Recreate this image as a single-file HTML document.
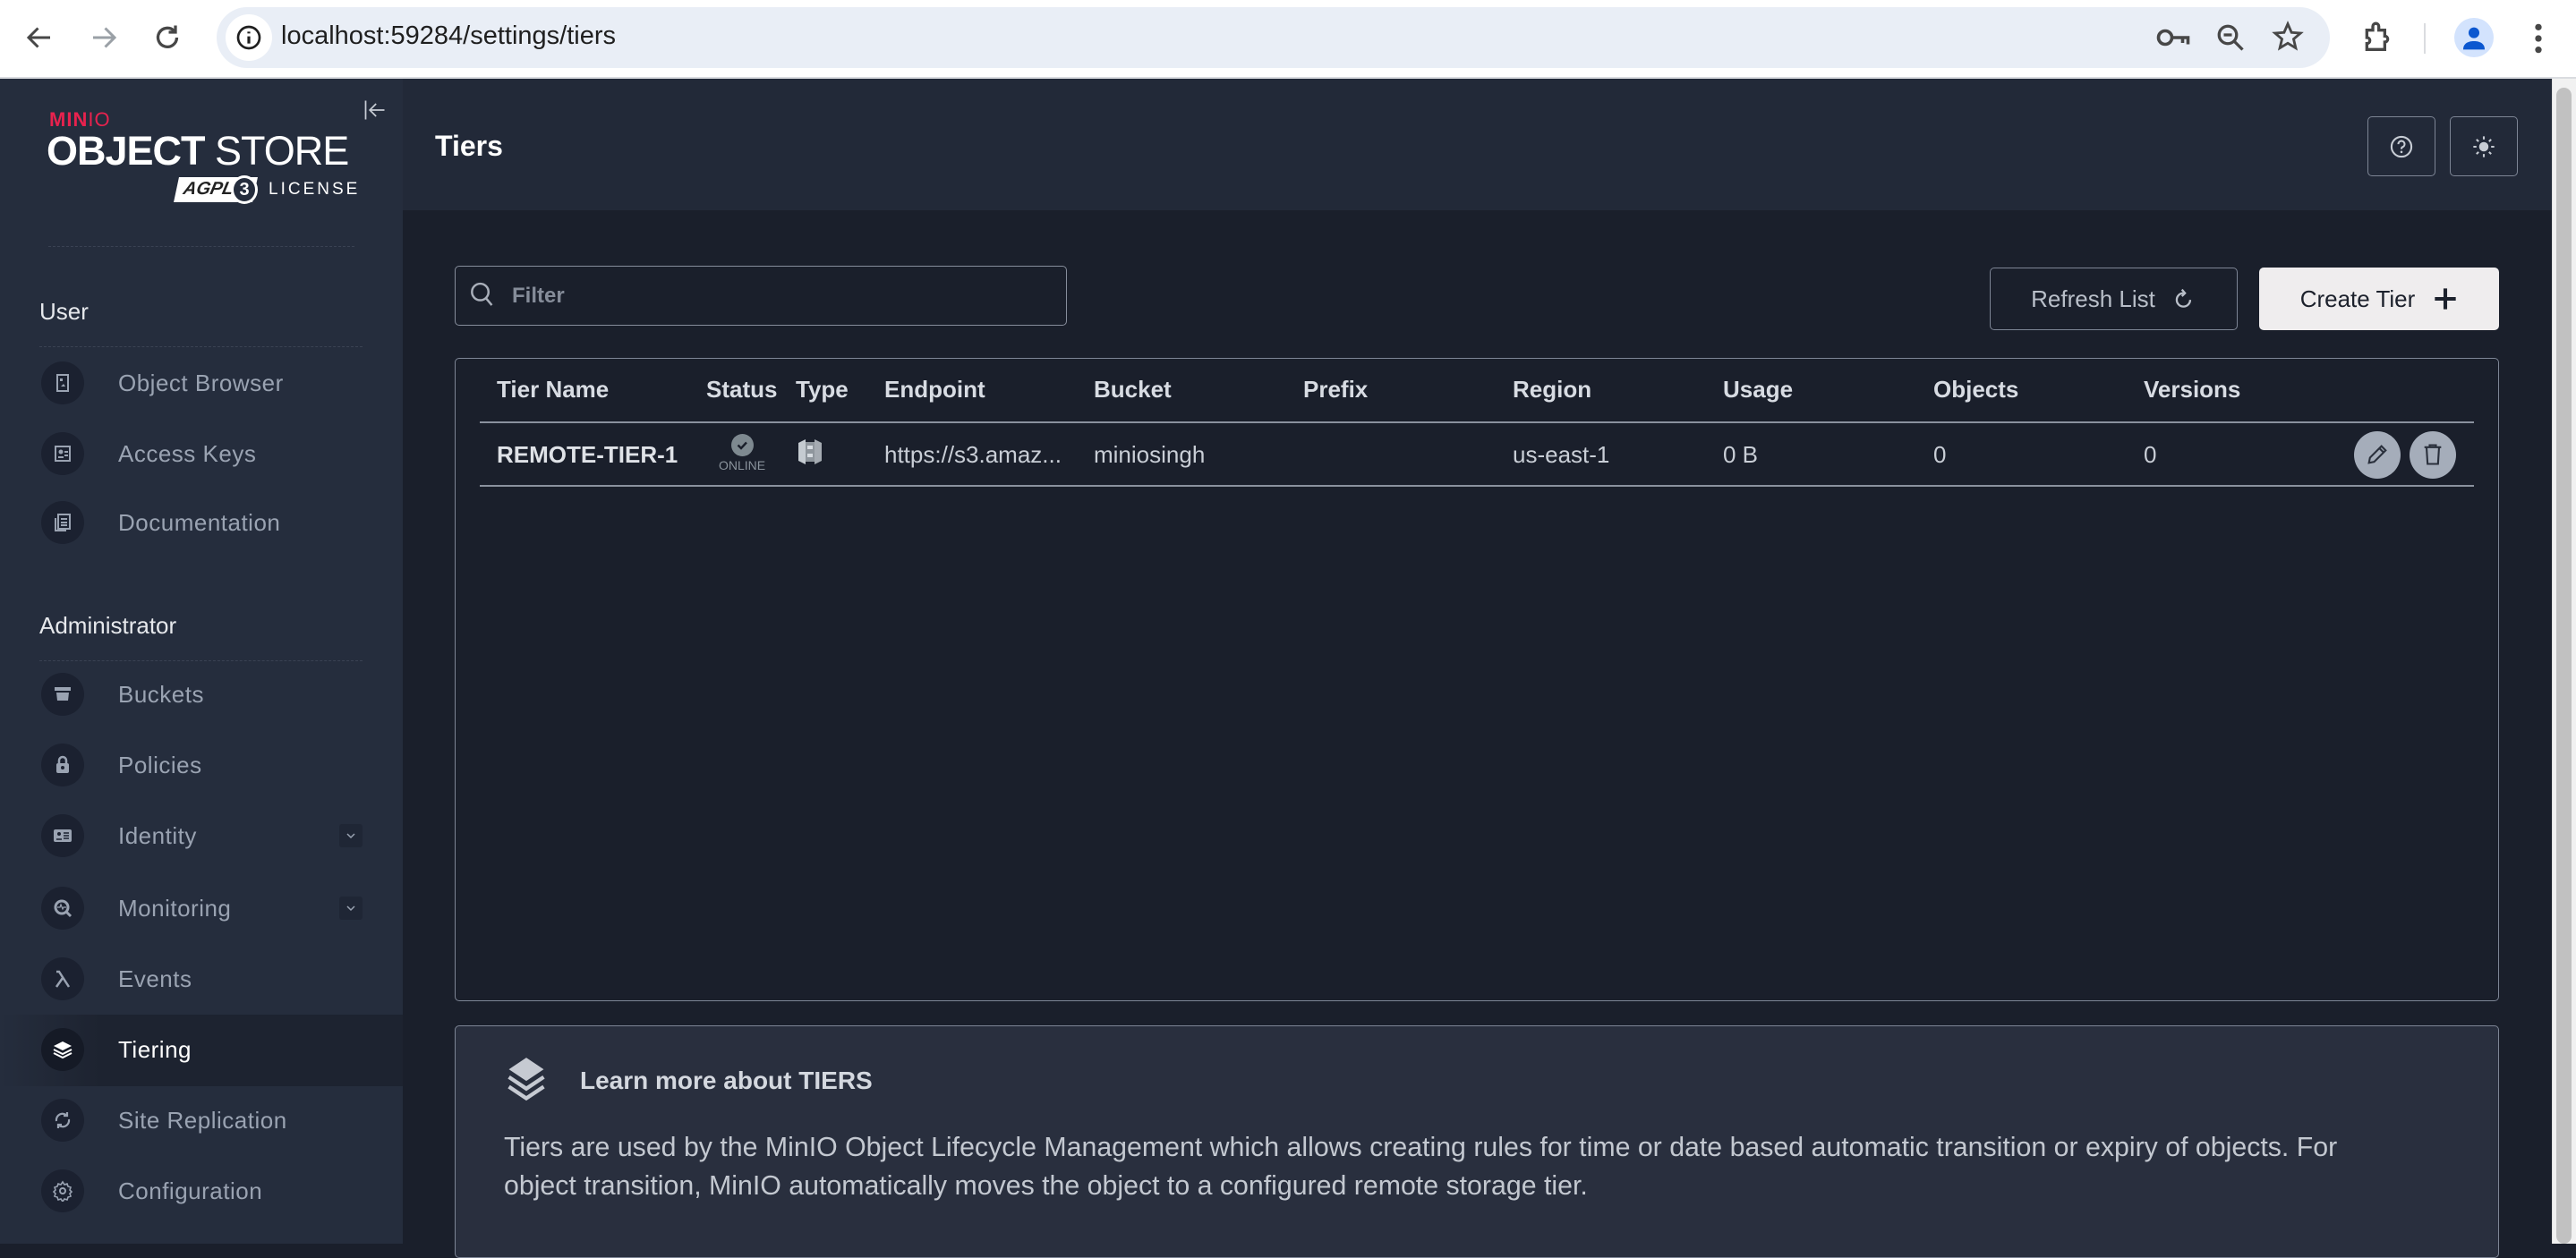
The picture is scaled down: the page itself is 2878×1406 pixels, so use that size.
<!DOCTYPE html>
<html><head><meta charset="utf-8"><style>
*{box-sizing:border-box;margin:0;padding:0}
body{width:2878px;height:1390px;overflow:hidden;font-family:"Liberation Sans",sans-serif;background:#1a1f2b;position:relative}
.abs{position:absolute}
#chrome{left:0;top:0;width:2878px;height:88px;background:#fff;border-bottom:2px solid #dadce0}
#pill{left:242px;top:8px;width:2361px;height:68px;border-radius:34px;background:#e9eef6}
#url{left:314px;top:22px;font-size:29px;color:#1f1f1f}
#side{left:0;top:88px;width:450px;height:1302px;background:#252d3d}
#hdr{left:450px;top:88px;width:2401px;height:147px;background:#222938}
#scroll{left:2851px;top:88px;width:27px;height:1302px;background:#f1f1f1;border-left:1px solid #e0e0e0}
#thumb{left:2856px;top:98px;width:17px;height:1292px;border-radius:9px;background:#c1c1c1}
.sec{left:44px;font-size:26px;color:#e6e8ec}
.sep{left:44px;width:361px;height:0;border-top:1px dashed #3a4253}
.item{left:44px;width:406px;height:60px}
.item .ic{position:absolute;left:2px;top:6px;width:48px;height:48px;border-radius:50%;background:#1b2130}
.item .ic svg{position:absolute;left:12px;top:12px}
.item .tx{position:absolute;left:88px;top:15px;font-size:26px;color:#9aa3b2;letter-spacing:0.5px}
.chev{position:absolute;left:335px;top:17px;width:26px;height:26px;background:#1f2635;border-radius:3px}
.btn{border-radius:5px;font-size:26px;display:flex;align-items:center;justify-content:center}
.hcell{position:absolute;top:420px;font-size:26px;font-weight:bold;color:#d8dce3}
.rcell{position:absolute;top:493px;font-size:26px;color:#c9ced6}
</style></head><body>
<div id="chrome" class="abs"></div>
<svg class="abs" style="left:26px;top:24px" width="36" height="36" viewBox="0 0 24 24"><path d="M20 12H5M11 5l-7 7 7 7" stroke="#474747" stroke-width="2" fill="none"/></svg>
<svg class="abs" style="left:98px;top:24px" width="36" height="36" viewBox="0 0 24 24"><path d="M4 12h15M13 5l7 7-7 7" stroke="#9aa0a6" stroke-width="2" fill="none"/></svg>
<svg class="abs" style="left:169px;top:24px" width="36" height="36" viewBox="0 0 24 24"><path d="M19 12a7 7 0 1 1-2-5" stroke="#474747" stroke-width="2.2" fill="none"/><path d="M18 3v5h-5" stroke="#474747" stroke-width="2.2" fill="none"/></svg>
<div id="pill" class="abs"></div>
<div class="abs" style="left:252px;top:16px;width:52px;height:52px;border-radius:50%;background:#fff"></div>
<svg class="abs" style="left:262px;top:26px" width="32" height="32" viewBox="0 0 24 24"><circle cx="12" cy="12" r="9" stroke="#1f1f1f" stroke-width="2" fill="none"/><path d="M12 11v6M12 7v1.5" stroke="#1f1f1f" stroke-width="2.4"/></svg>
<div id="url" class="abs" style="top:24px">localhost:59284/settings/tiers</div>
<svg class="abs" style="left:2408px;top:24px" width="40" height="36" viewBox="0 0 26 24"><circle cx="7" cy="12" r="5" stroke="#474747" stroke-width="2.4" fill="none"/><path d="M12 12h12v5M20 12v4" stroke="#474747" stroke-width="2.4" fill="none"/></svg>
<svg class="abs" style="left:2474px;top:24px" width="36" height="36" viewBox="0 0 24 24"><circle cx="10" cy="10" r="6.5" stroke="#474747" stroke-width="2.2" fill="none"/><path d="M15 15l6 6M7 10h6" stroke="#474747" stroke-width="2.2"/></svg>
<svg class="abs" style="left:2537px;top:22px" width="38" height="38" viewBox="0 0 24 24"><path d="M12 3l2.6 6 6.4.5-4.9 4.2 1.5 6.3L12 16.6 6.4 20l1.5-6.3L3 9.5l6.4-.5z" stroke="#474747" stroke-width="1.8" fill="none"/></svg>
<svg class="abs" style="left:2636px;top:22px" width="40" height="40" viewBox="0 0 24 24"><path d="M5 7h4V4.5a2 2 0 0 1 4 0V7h4v4a2 2 0 0 1 0 4v5H5v-4a2 2 0 0 0 0-4z" stroke="#474747" stroke-width="2" fill="none"/></svg>
<div class="abs" style="left:2708px;top:26px;width:2px;height:34px;background:#dadce0"></div>
<div class="abs" style="left:2742px;top:20px;width:44px;height:44px;border-radius:50%;background:#d3e3fd"></div>
<svg class="abs" style="left:2748px;top:26px" width="32" height="32" viewBox="0 0 24 24"><circle cx="12" cy="8" r="4.5" fill="#0b57d0"/><path d="M3 22c0-5 4-7 9-7s9 2 9 7z" fill="#0b57d0"/></svg>
<svg class="abs" style="left:2826px;top:24px" width="20" height="38" viewBox="0 0 10 24"><circle cx="5" cy="4" r="2.3" fill="#474747"/><circle cx="5" cy="12" r="2.3" fill="#474747"/><circle cx="5" cy="20" r="2.3" fill="#474747"/></svg>

<div id="side" class="abs"></div>
<div class="abs" style="left:55px;top:121px;font-size:22px;font-weight:bold;color:#e8224e;letter-spacing:1px">MIN<span style="font-weight:normal">IO</span></div>
<div class="abs" style="left:52px;top:143px;font-size:45px;color:#fff;letter-spacing:-1px;white-space:nowrap"><b>OBJECT</b> STORE</div>
<div class="abs" style="left:197px;top:198px;width:88px;height:28px;background:#fff;transform:skewX(-12deg);color:#222;font-size:20px;font-style:italic;font-weight:bold;line-height:26px;padding-left:8px">AGPL</div>
<div class="abs" style="left:258px;top:196px;width:30px;height:32px;border-radius:50%;background:#252d3d;border:3px solid #fff;color:#fff;font-size:20px;font-weight:bold;text-align:center;line-height:26px">3</div>
<div class="abs" style="left:300px;top:201px;font-size:19px;color:#fff;letter-spacing:3px">LICENSE</div>
<svg class="abs" style="left:405px;top:110px" width="28" height="26" viewBox="0 0 24 22"><path d="M3 2v18M21 11H8M13 5l-6 6 6 6" stroke="#c7ccd4" stroke-width="1.5" fill="none"/></svg>
<div class="sep abs" style="top:275px;left:54px;width:342px"></div>
<div class="sec abs" style="top:333px">User</div>
<div class="sep abs" style="top:387px"></div>
<div class="item abs" style="top:398px"><div class="ic"><svg width="24" height="24" viewBox="0 0 24 24"><rect x="6" y="3" width="12" height="18" stroke="#9aa3b2" stroke-width="2" fill="none"/><rect x="9" y="7" width="3" height="3" fill="#9aa3b2"/><path d="M10 16l3-3 2 3z" fill="#9aa3b2"/></svg></div><div class="tx">Object Browser</div></div>
<div class="item abs" style="top:477px"><div class="ic"><svg width="24" height="24" viewBox="0 0 24 24"><rect x="4" y="4" width="16" height="16" stroke="#9aa3b2" stroke-width="2" fill="none"/><circle cx="10" cy="10" r="2.5" fill="#9aa3b2"/><path d="M7 16h6M14 10h4M14 14h4" stroke="#9aa3b2" stroke-width="2"/></svg></div><div class="tx">Access Keys</div></div>
<div class="item abs" style="top:554px"><div class="ic"><svg width="24" height="24" viewBox="0 0 24 24"><rect x="7" y="3" width="13" height="16" stroke="#9aa3b2" stroke-width="2" fill="none"/><path d="M4 7v14h12M10 8h7M10 12h7M10 15h7" stroke="#9aa3b2" stroke-width="2" fill="none"/></svg></div><div class="tx">Documentation</div></div>
<div class="sec abs" style="top:684px">Administrator</div>
<div class="sep abs" style="top:738px"></div>
<div class="item abs" style="top:746px"><div class="ic"><svg width="24" height="24" viewBox="0 0 24 24"><path d="M3 4h18v4H3zM5 10h14l-1 9H6z" fill="#9aa3b2"/></svg></div><div class="tx">Buckets</div></div>
<div class="item abs" style="top:825px"><div class="ic"><svg width="24" height="24" viewBox="0 0 24 24"><path d="M8 10V7a4 4 0 0 1 8 0v3" stroke="#9aa3b2" stroke-width="2.5" fill="none"/><rect x="5" y="10" width="14" height="11" rx="2" fill="#9aa3b2"/><circle cx="12" cy="15" r="2" fill="#1b2130"/></svg></div><div class="tx">Policies</div></div>
<div class="item abs" style="top:904px"><div class="ic"><svg width="24" height="24" viewBox="0 0 24 24"><rect x="2" y="5" width="20" height="14" rx="2" fill="#9aa3b2"/><circle cx="8" cy="10" r="2" fill="#1b2130"/><path d="M5 16h6M13 9h6M13 12h6M13 15h6" stroke="#1b2130" stroke-width="1.5"/></svg></div><div class="tx">Identity</div><div class="chev"><svg width="26" height="26" viewBox="0 0 26 26"><path d="M9 11l4 4 4-4" stroke="#9aa3b2" stroke-width="1.5" fill="none"/></svg></div></div>
<div class="item abs" style="top:985px"><div class="ic"><svg width="24" height="24" viewBox="0 0 24 24"><circle cx="11" cy="11" r="7" stroke="#9aa3b2" stroke-width="3" fill="none"/><path d="M16 16l5 5" stroke="#9aa3b2" stroke-width="3"/><path d="M6 11h3l1-3 2 5 1-2h3" stroke="#9aa3b2" stroke-width="1.2" fill="none"/></svg></div><div class="tx">Monitoring</div><div class="chev"><svg width="26" height="26" viewBox="0 0 26 26"><path d="M9 11l4 4 4-4" stroke="#9aa3b2" stroke-width="1.5" fill="none"/></svg></div></div>
<div class="item abs" style="top:1064px"><div class="ic"><svg width="24" height="24" viewBox="0 0 24 24"><path d="M5 4h3l11 17M12 11L5 21" stroke="#9aa3b2" stroke-width="2.5" fill="none"/></svg></div><div class="tx">Events</div></div>
<div class="abs" style="left:0;top:1134px;width:450px;height:80px;background:linear-gradient(90deg,#252d3d 0%,#1d2330 25%,#1d2330 100%)"></div>
<div class="item abs" style="top:1143px"><div class="ic" style="background:#151a26"><svg width="24" height="24" viewBox="0 0 24 24"><path d="M12 3l10 5-10 5-10-5z" fill="#fff"/><path d="M2 12l10 5 10-5M2 16l10 5 10-5" stroke="#fff" stroke-width="2" fill="none"/></svg></div><div class="tx" style="color:#fff">Tiering</div></div>
<div class="item abs" style="top:1222px"><div class="ic"><svg width="24" height="24" viewBox="0 0 24 24"><path d="M5 13a7 7 0 0 1 12-6M19 11a7 7 0 0 1-12 6" stroke="#9aa3b2" stroke-width="2.2" fill="none"/><path d="M17 3v4h-4M7 21v-4h4" stroke="#9aa3b2" stroke-width="2.2" fill="none"/></svg></div><div class="tx">Site Replication</div></div>
<div class="item abs" style="top:1301px"><div class="ic"><svg width="24" height="24" viewBox="0 0 24 24"><circle cx="12" cy="12" r="3" stroke="#9aa3b2" stroke-width="2" fill="none"/><path d="M12 2l2 3 3-1 1 3 3 1-1 3 2 2-2 2 1 3-3 1-1 3-3-1-2 3-2-3-3 1-1-3-3-1 1-3-2-2 2-2-1-3 3-1 1-3 3 1z" stroke="#9aa3b2" stroke-width="1.6" fill="none"/></svg></div><div class="tx">Configuration</div></div>

<div id="hdr" class="abs"></div>
<div class="abs" style="left:486px;top:145px;font-size:32px;font-weight:bold;color:#fff">Tiers</div>
<div class="abs btn" style="left:2645px;top:130px;width:76px;height:67px;border:1.5px solid #7d8595"><svg width="28" height="28" viewBox="0 0 24 24"><circle cx="12" cy="12" r="9.5" stroke="#c7ccd4" stroke-width="1.8" fill="none"/><path d="M9 9.5a3 3 0 1 1 4 2.8c-.8.4-1 1-1 2" stroke="#c7ccd4" stroke-width="1.8" fill="none"/><circle cx="12" cy="17" r="1.1" fill="#c7ccd4"/></svg></div>
<div class="abs btn" style="left:2737px;top:130px;width:76px;height:67px;border:1.5px solid #7d8595"><svg width="28" height="28" viewBox="0 0 24 24"><circle cx="12" cy="12" r="4.5" fill="#c7ccd4"/><path d="M12 2v3M12 19v3M2 12h3M19 12h3M5 5l2 2M17 17l2 2M5 19l2-2M17 7l2-2" stroke="#c7ccd4" stroke-width="1.8"/></svg></div>

<div class="abs" style="left:508px;top:297px;width:684px;height:67px;border:1.5px solid #868d9b;border-radius:5px"></div>
<svg class="abs" style="left:524px;top:314px" width="30" height="32" viewBox="0 0 24 26"><circle cx="10" cy="10" r="7.5" stroke="#a9afba" stroke-width="2" fill="none"/><path d="M15.5 16l5 6" stroke="#a9afba" stroke-width="2"/></svg>
<div class="abs" style="left:572px;top:317px;font-size:24px;font-weight:bold;color:#858c99">Filter</div>
<div class="abs btn" style="left:2223px;top:299px;width:277px;height:70px;border:1.5px solid #7d8595;color:#b9bfc9">Refresh List<svg style="margin-left:18px" width="28" height="30" viewBox="0 0 24 26"><path d="M18 14a6.5 6.5 0 1 1-6.5-6.5" stroke="#b9bfc9" stroke-width="2" fill="none"/><path d="M10 4l3 3.5-3 3" stroke="#b9bfc9" stroke-width="2" fill="none"/></svg></div>
<div class="abs btn" style="left:2524px;top:299px;width:268px;height:70px;background:#efedee;color:#1c212c">Create Tier<svg style="margin-left:20px" width="28" height="28" viewBox="0 0 24 24"><path d="M12 2v20M2 12h20" stroke="#1c212c" stroke-width="3.5"/></svg></div>

<div class="abs" style="left:508px;top:400px;width:2284px;height:719px;border:1.5px solid #7d8595;border-radius:5px"></div>
<div class="hcell" style="left:555px">Tier Name</div>
<div class="hcell" style="left:789px">Status</div>
<div class="hcell" style="left:889px">Type</div>
<div class="hcell" style="left:988px">Endpoint</div>
<div class="hcell" style="left:1222px">Bucket</div>
<div class="hcell" style="left:1456px">Prefix</div>
<div class="hcell" style="left:1690px">Region</div>
<div class="hcell" style="left:1925px">Usage</div>
<div class="hcell" style="left:2160px">Objects</div>
<div class="hcell" style="left:2395px">Versions</div>
<div class="abs" style="left:536px;top:471px;width:2228px;height:2px;background:#8a919e"></div>
<div class="rcell" style="left:555px;font-weight:bold;color:#dfe2e7">REMOTE-TIER-1</div>
<div class="abs" style="left:817px;top:485px;width:25px;height:25px;border-radius:50%;background:#7e8990"></div>
<svg class="abs" style="left:817px;top:485px" width="25" height="25" viewBox="0 0 25 25"><path d="M7.5 12.5l3.5 3.5 6-6.5" stroke="#1a1f2b" stroke-width="2.4" fill="none"/></svg>
<div class="abs" style="left:803px;top:512px;font-size:14px;color:#8a939c">ONLINE</div>
<svg class="abs" style="left:888px;top:488px" width="34" height="34" viewBox="0 0 34 34"><path d="M4 7l8-4v28l-8-4z" fill="#c5cbd1"/><path d="M30 7l-8-4v28l8-4z" fill="#a5abb2"/><rect x="12" y="6" width="10" height="22" fill="#8f969d"/><rect x="14" y="10" width="6" height="4" fill="#d7dce1"/><rect x="14" y="19" width="6" height="4" fill="#d7dce1"/></svg>
<div class="rcell" style="left:988px">https://s3.amaz...</div>
<div class="rcell" style="left:1222px">miniosingh</div>
<div class="rcell" style="left:1690px">us-east-1</div>
<div class="rcell" style="left:1925px">0 B</div>
<div class="rcell" style="left:2160px">0</div>
<div class="rcell" style="left:2395px">0</div>
<div class="abs" style="left:2630px;top:482px;width:52px;height:53px;border-radius:50%;background:#a5adba"></div>
<svg class="abs" style="left:2642px;top:494px" width="28" height="28" viewBox="0 0 24 24"><path d="M4 20l1-5L16 4l4 4L9 19z M14 6l4 4" stroke="#2a303c" stroke-width="1.8" fill="none"/></svg>
<div class="abs" style="left:2692px;top:482px;width:52px;height:53px;border-radius:50%;background:#a5adba"></div>
<svg class="abs" style="left:2704px;top:494px" width="28" height="28" viewBox="0 0 24 24"><path d="M4 5h16M9 5V3h6v2M6 5l1 16h10l1-16" stroke="#2a303c" stroke-width="1.8" fill="none"/></svg>
<div class="abs" style="left:536px;top:542px;width:2228px;height:2px;background:#8a919e"></div>

<div class="abs" style="left:508px;top:1146px;width:2284px;height:260px;background:#292f3e;border:1.5px solid #7d8595;border-radius:5px"></div>
<svg class="abs" style="left:562px;top:1180px" width="52" height="54" viewBox="0 0 24 25"><path d="M12 1l9 6-9 6-9-6z" fill="#c6cad2"/><path d="M3 11l9 6 9-6M3 16l9 6 9-6" stroke="#c6cad2" stroke-width="2" fill="none"/></svg>
<div class="abs" style="left:648px;top:1192px;font-size:28px;font-weight:bold;color:#d4d8df">Learn more about TIERS</div>
<div class="abs" style="left:563px;top:1261px;width:2120px;font-size:30.3px;line-height:43px;color:#c3c8d0">Tiers are used by the MinIO Object Lifecycle Management which allows creating rules for time or date based automatic transition or expiry of objects. For object transition, MinIO automatically moves the object to a configured remote storage tier.</div>

<div id="scroll" class="abs"></div>
<div id="thumb" class="abs"></div>
</body></html>
